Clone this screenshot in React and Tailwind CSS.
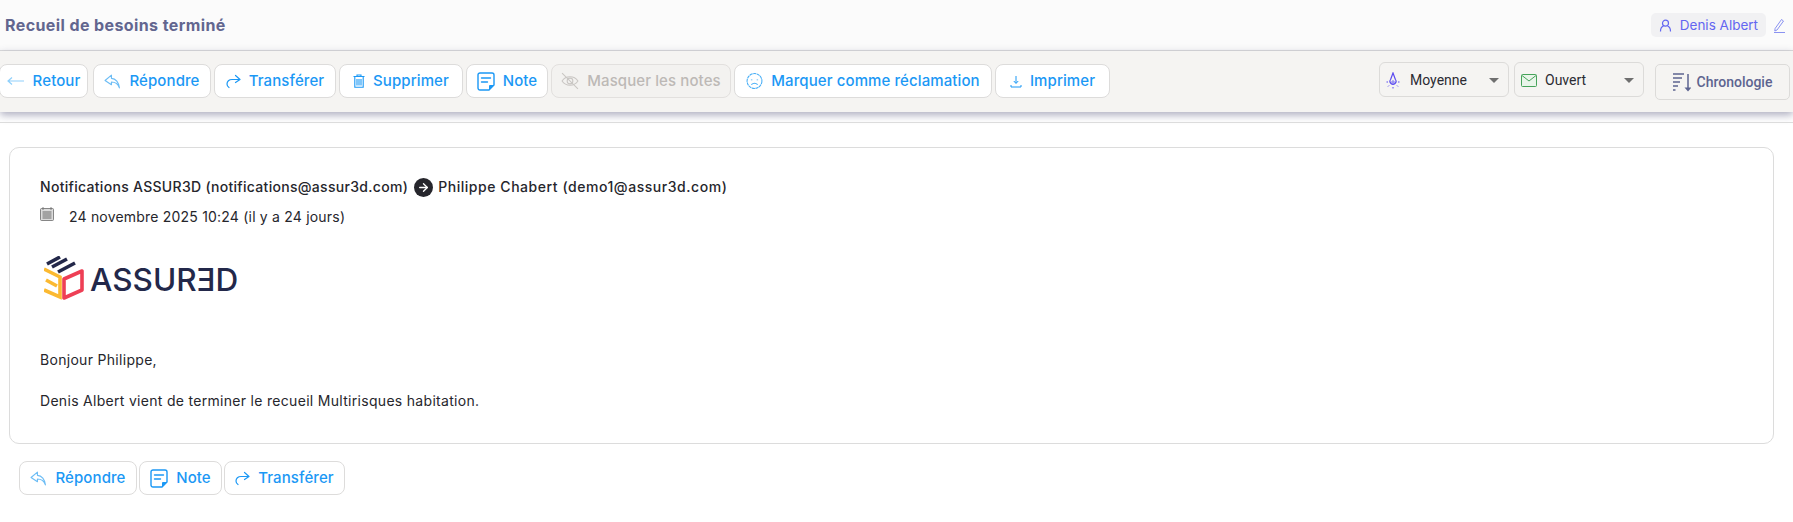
import { ArrowRight } from 'lucide-react'

const sans = "font-['Inter','Noto_Sans',sans-serif]"

function BackIcon() {
  return (
    <svg width="18" height="10" viewBox="0 0 18 10" fill="none" stroke="#8fd0fb" strokeWidth="1.2">
      <path d="M1 5h16M5 1.5 1 5l4 3.5" />
    </svg>
  )
}

function ReplyIcon() {
  return (
    <svg width="17" height="15" viewBox="0 0 16 14" fill="none" stroke="#6dbdf5" strokeWidth="1.1" strokeLinejoin="round">
      <path d="M7 1 1 6l6 4V7.500c3.500 0 6 1.500 7.500 5.500C14 8 11 4 7 4z" />
    </svg>
  )
}

function ForwardIcon() {
  return (
    <svg width="15" height="15" viewBox="0 0 15 15" fill="none" stroke="#1b98f5" strokeWidth="1.2" strokeLinecap="round" strokeLinejoin="round">
      <path d="M9.500 1.500 14 5.500 9.500 8.500M14 5.500H6C3 5.500 1 7.500 1 10c0 1.500.8 2.800 2 3.500" />
    </svg>
  )
}

function TrashIcon() {
  return (
    <svg width="12" height="14" viewBox="0 0 12 14" fill="none" stroke="#1b98f5" strokeWidth="1.1">
      <path d="M.5 2.500h11M4 2.500V1h4v1.500M1.800 2.500h8.400v10.800H1.800z" />
      <path d="M4 5v6.500M6 5v6.500M8 5v6.500" />
    </svg>
  )
}

function NoteIcon() {
  return (
    <svg width="18" height="19" viewBox="0 0 18 19" fill="none" stroke="#1b98f5" strokeWidth="1.4" strokeLinejoin="round">
      <path d="M3 1h12a2 2 0 0 1 2 2v10l-5 5H3a2 2 0 0 1-2-2V3a2 2 0 0 1 2-2z" />
      <path d="M4.500 6h9M4.500 10h6" strokeLinecap="round" />
      <path d="M17 13h-4a1 1 0 0 0-1 1v4z" fill="#1b98f5" stroke="none" />
    </svg>
  )
}

function EyeOffIcon() {
  return (
    <svg width="18" height="18" viewBox="0 0 17 17" fill="none" stroke="#c9c6c3" strokeWidth="1">
      <path d="M1 8.500C3 5.500 5.500 4.500 8.500 4.500s5.500 1 7.500 4c-2 3-4.500 4-7.500 4S3 11.500 1 8.500z" />
      <circle cx="8.500" cy="8.500" r="2.700" />
      <path d="M1 1l15 15" />
    </svg>
  )
}

function SadIcon() {
  return (
    <svg width="17" height="18" viewBox="0 0 16 17" fill="none" stroke="#45adf6" strokeWidth="1">
      <circle cx="8" cy="8.500" r="7" strokeDasharray="3 .5" />
      <path d="M5.300 7v.8M10.700 7v.8" strokeWidth="1.400" />
      <path d="M5 12c1.800-1.700 4.200-1.700 6 0" />
    </svg>
  )
}

function DownloadIcon() {
  return (
    <svg width="12" height="13" viewBox="0 0 12 13" fill="none" stroke="#1b98f5" strokeWidth="1">
      <path d="M6 1v7M3.800 6 6 8.500 8.200 6" />
      <path d="M1 10v2h10v-2" />
    </svg>
  )
}

function UserIcon() {
  return (
    <svg width="13" height="13" viewBox="0 0 13 13" fill="none" stroke="#6366f1" strokeWidth="1.200">
      <circle cx="6.500" cy="4.200" r="3" />
      <path d="M1.500 12.500c0-3 1.500-5 3-5.500M11.500 12.500c0-3-1.500-5-3-5.500" />
    </svg>
  )
}

function PenIcon() {
  return (
    <svg width="13" height="15" viewBox="0 0 13 15" fill="none" stroke="#7d86ef" strokeWidth=".9">
      <path d="M8.500 1.500 10.500 3 4 12 1.800 13l.3-2.500z" />
      <path d="M1 14.500h11" />
    </svg>
  )
}

function PriorityIcon() {
  return (
    <svg width="14" height="17" viewBox="0 0 14 17" fill="none" stroke="#5b4bf0" strokeWidth="1">
      <path d="M7 1 4.600 7.500a3 3 0 1 0 4.800 0z" strokeWidth="1.200" />
      <circle cx="7" cy="10" r="1.200" strokeWidth=".8" />
      <path d="M.5 10h1.500M12 10h1.500M2 14.500l1-1M12 14.500l-1-1M7 15v1.500" />
    </svg>
  )
}

function MailIcon() {
  return (
    <svg width="16" height="13" viewBox="0 0 16 13" fill="#e9f5ea" stroke="#46a35a" strokeWidth="1">
      <rect x=".5" y=".5" width="15" height="12" rx="1" />
      <path d="M1 1.500 8 7l7-5.500" fill="none" />
    </svg>
  )
}

function SortIcon() {
  return (
    <svg width="18" height="19" viewBox="0 0 18 19" fill="none" stroke="#5d6490" strokeWidth="1.500">
      <path d="M0 1h11M0 5h9M0 9h7M0 13h5M0 17h2.500" />
      <path d="M15 1v15" />
      <path d="M11.500 14.500h7L15 18.500z" fill="#5d6490" stroke="none" />
    </svg>
  )
}

function CalendarIcon() {
  return (
    <svg width="14" height="14" viewBox="0 0 14 14" fill="#dcdcdc" stroke="#6b6b6b" strokeWidth=".8">
      <rect x=".5" y="1.500" width="13" height="12" rx="1" />
      <path d="M3 0v3M11 0v3" />
      <path d="M2.500 5h9M2.500 7h9M2.500 9h9M2.500 11h9" strokeWidth="1" />
    </svg>
  )
}

function LogoMark() {
  return (
    <svg width="40" height="44" viewBox="0 0 40 44" fill="none" strokeWidth="3.600">
      <path d="M3 8 16 1M8 11 23 3M14 16 31 7" stroke="#23284a" />
      <path d="M0 13l16 8v20L0 34M2 24l11 6" stroke="#fbb931" />
      <path d="M20 23 38 15v19L20 42z" stroke="#ee3f55" strokeLinejoin="round" />
    </svg>
  )
}

const toolbar = [
  { label: 'Retour', icon: BackIcon, w: 'w-[89px] mr-[2px]' },
  { label: 'Répondre', icon: ReplyIcon, w: 'w-[118px]' },
  { label: 'Transférer', icon: ForwardIcon, w: 'w-[122px]' },
  { label: 'Supprimer', icon: TrashIcon, w: 'w-[124px]' },
  { label: 'Note', icon: NoteIcon, w: 'w-[82px]' },
  { label: 'Masquer les notes', icon: EyeOffIcon, w: 'w-[180px]', off: true },
  { label: 'Marquer comme réclamation', icon: SadIcon, w: 'w-[258px]' },
  { label: 'Imprimer', icon: DownloadIcon, w: 'w-[115px]' },
]

const bottom = [
  { label: 'Répondre', icon: ReplyIcon, w: 'w-[118px]' },
  { label: 'Note', icon: NoteIcon, w: 'w-[83px]' },
  { label: 'Transférer', icon: ForwardIcon, w: 'w-[121px]' },
]

function ActionButton({ label, icon: Icon, w, off }) {
  return (
    <button
      className={`${w} h-[34px] shrink-0 flex items-center justify-center gap-[8px] border rounded-[8px] text-[15px] tracking-[0.1px] font-medium whitespace-nowrap ${
        off ? 'bg-[#f3f2f0] border-[#e2e0de] text-[#bdb9b6]' : 'bg-white border-[#dddcdb] text-[#1b98f5]'
      }`}
    >
      <Icon />
      {label}
    </button>
  )
}

function Select({ icon: Icon, label, gap }) {
  return (
    <div className={`w-[130px] h-[35px] flex items-center ${gap} pt-[2px] pl-[6px] pr-[9px] bg-[#f5f4f2] border border-[#dcdbd9] rounded-[6px] font-['Roboto',sans-serif] text-[14px] text-[#2b2b33]`}>
      <Icon />
      <span className="flex-1">{label}</span>
      <span className="w-0 h-0 border-x-[5px] border-x-transparent border-t-[5px] border-t-[#6f6f6f]" />
    </div>
  )
}

export default function App() {
  return (
    <div className={`${sans} w-[1793px] h-[522px] overflow-hidden bg-white text-[#26262c]`}>
      {/* Title bar */}
      <header className="h-[51px] flex items-center justify-between pl-[5px] pr-[7px] bg-[#fbfbfb] border-b border-[#dcdcdc]">
        <h1 className="text-[16px] tracking-[0.4px] font-bold text-[#62668f]">Recueil de besoins terminé</h1>
        <div className="flex items-center gap-[7px]">
          <span className="h-[24px] px-[8px] flex items-center gap-[8px] rounded-[5px] bg-[#f1f1f3] text-[13.500px] text-[#6366f1]">
            <UserIcon />
            Denis Albert
          </span>
          <PenIcon />
        </div>
      </header>

      {/* Toolbar */}
      <div className="h-[61px] flex items-start justify-between pt-[11px] pr-[3px] bg-[#f5f4f2] shadow-[0_3px_8px_rgba(70,70,110,0.45)]">
        <div className="flex gap-[3px] ml-[-1px] mt-[2px]">
          {toolbar.map((item) => (
            <ActionButton key={item.label} {...item} />
          ))}
        </div>
        <div className="flex">
          <Select icon={PriorityIcon} label="Moyenne" gap="gap-[10px]" />
          <div className="w-[5px]" />
          <Select icon={MailIcon} label="Ouvert" gap="gap-[8px]" />
          <button className="ml-[11px] mt-[2px] w-[135px] h-[36px] flex items-center justify-center gap-[6px] border border-[#dcdbd9] rounded-[5px] font-['Roboto',sans-serif] text-[14px] font-medium text-[#5d6490]">
            <SortIcon />
            Chronologie
          </button>
        </div>
      </div>

      {/* Message */}
      <main className="pt-[10px]">
        <div className="border-t border-[#dcdcdc] pt-[24px] px-[9px]">
          <article className="w-[1765px] h-[297px] border border-[#dcdcdc] rounded-[10px] pt-[29px] pl-[30px] text-[14px] leading-[20px] tracking-[0.3px]">
            <div className="flex items-center font-medium h-[20px]">
              Notifications ASSUR3D (notifications@assur3d.com)
              <span className="ml-[6px] mr-[5px] w-[19px] h-[19px] rounded-full bg-[#26262c] flex items-center justify-center">
                <ArrowRight size={13} strokeWidth={2.5} className="text-white" />
              </span>
              <span className="tracking-[0.55px]">Philippe Chabert (demo1@assur3d.com)</span>
            </div>
            <div className="flex items-start mt-[10px] h-[20px] gap-[15px] tracking-[0.2px]">
              <CalendarIcon />
              <span>24 novembre 2025 10:24 (il y a 24 jours)</span>
            </div>
            <div className="flex items-center gap-[6px] mt-[29px] ml-[4px] tracking-normal">
              <LogoMark />
              <span className="mt-[4px] text-[31.500px] leading-none font-medium text-[#23284a]">ASSURƎD</span>
            </div>
            <p className="mt-[50px]">Bonjour Philippe,</p>
            <p className="mt-[21px]">Denis Albert vient de terminer le recueil Multirisques habitation.</p>
          </article>
        </div>

        <div className="flex gap-[2px] pl-[19px] mt-[17px]">
          {bottom.map((item) => (
            <ActionButton key={item.label} {...item} />
          ))}
        </div>
      </main>
    </div>
  )
}
